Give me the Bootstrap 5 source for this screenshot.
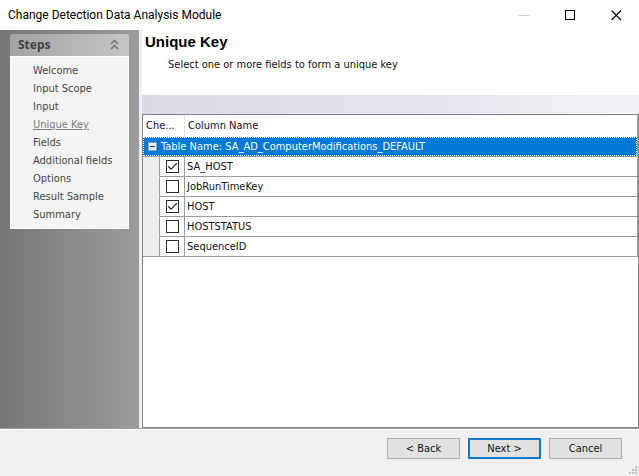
<!DOCTYPE html>
<html lang="en">
<head>
<meta charset="utf-8">
<meta name="viewport" content="width=device-width, initial-scale=1">
<title>Change Detection Data Analysis Module</title>
<link href="https://cdn.jsdelivr.net/npm/bootstrap@5.3.0/dist/css/bootstrap.min.css" rel="stylesheet">
<style>
body { font-family: "DejaVu Sans Condensed", "Noto Sans", sans-serif; font-size: 11px; line-height: 18px; color: #111; background: #fff; }
.titlebar { height: 30px; padding-left: 8px; font-family: Roboto, sans-serif; font-size: 12px; color: #000; }
.win-btn { width: 46px; height: 28px; border: 0; background: transparent; }
.sidebar { width: 139px; padding: 4px 10px; background: linear-gradient(90deg, #767676, #9c9c9c); }
.steps-head { height: 22px; padding: 0 8px; border: 0; border-radius: 2px 2px 0 0; background: linear-gradient(90deg, #a3a3a3, #c6c6c6); color: #404040; font-family: "Noto Sans", sans-serif; font-size: 12px; font-weight: 700; }
.steps-list { padding: 5px 0 4px 22px; background: #f4f4f4; border: 1px solid #fff; }
.steps-list a { color: #444; text-decoration: none; }
.steps-list a.current { color: #7d7d7d; text-decoration: underline; }
.work { border-left: 3px solid #f0f0f0; }
.page-head { height: 65px; padding: 3px 3px 0; }
.page-head h1 { font-family: "Liberation Sans", Arial, sans-serif; font-size: 15px; line-height: 18px; font-weight: 700; color: #000; }
.page-head p { padding: 5px 0 0 23px; }
.band { height: 19px; background: linear-gradient(90deg, #dadae6, #e4e4ee 55%, #f3f3f6); }
.grid-box { border: 1px solid #82868b; }
.fields { width: 100%; table-layout: fixed; border-collapse: separate; border-spacing: 0; border-right: 1px solid #a0a0a0; }
.fields td, .fields th { padding: 0 0 0 3px; font-weight: 400; white-space: nowrap; }
.fields th { height: 22px; border-right: 1px solid #e2e2e2; }
.fields th + th { border-right: 0; }
.fields td { height: 20px; padding-left: 2px; border-bottom: 1px solid #9b9b9f; border-right: 1px solid #9b9b9f; }
.fields td:last-child { border-right: 0; }
.fields td.gutter { background: #eee; border-bottom-color: #eee; }
.fields tr:last-child td.gutter { border-bottom-color: #9b9b9f; }
.fields td.tick { padding: 0 0 0 6px; }
.fields td.group-cell { padding: 0; }
.group-row { height: 19px; padding-left: 4px; gap: 4px; background: #0078d7; color: #fff; border: 1px dotted #fff; }
.fold { width: 9px; height: 9px; padding: 0; border: 0; background: transparent; }
.fold svg, .tick input { display: block; }
.tick input { appearance: none; width: 13px; height: 13px; margin: 0; border: 1px solid #2b2b2b; border-radius: 0; background: #fff; }
.tick input:checked { background: #fff url("data:image/svg+xml,%3Csvg xmlns='http://www.w3.org/2000/svg' viewBox='0 0 11 11'%3E%3Cpath d='M1.2 5.3L4 8.1L9.8 2.3' fill='none' stroke='%23333' stroke-width='1.3'/%3E%3C/svg%3E") center/11px 11px no-repeat; }
.foot { height: 48px; padding: 9px 17px 0 0; gap: 8px; border-top: 1px solid #a0a0a0; box-shadow: inset 0 1px #fff; background: #f0f0f0; }
.cmd { width: 73px; height: 21px; padding: 0; font-size: 11px; line-height: 17px; border: 1px solid #adadad; border-radius: 0; background: #e1e1e1; color: #111; }
.cmd.primary { border: 2px solid #0f78cc; }
.grip { right: 2px; bottom: 2px; }
</style>
<script src="https://cdn.jsdelivr.net/npm/bootstrap@5.3.0/dist/js/bootstrap.bundle.min.js"></script>
</head>
<body>
<div class="d-flex flex-column vh-100 overflow-hidden">
  <header class="titlebar d-flex align-items-center flex-shrink-0">
    <span class="me-auto">Change Detection Data Analysis Module</span>
    <button type="button" class="win-btn d-flex align-items-center justify-content-center" aria-label="Minimize" disabled><svg width="11" height="11"><path d="M0 5.500h10" stroke="#ccc"/></svg></button>
    <button type="button" class="win-btn d-flex align-items-center justify-content-center" aria-label="Maximize"><svg width="11" height="11"><path d="M.5.5h9v9h-9z" fill="none" stroke="#000" shape-rendering="crispEdges"/></svg></button>
    <button type="button" class="win-btn d-flex align-items-center justify-content-center" aria-label="Close"><svg width="11" height="11"><path d="M.5.5l9.500 9.500M10 .5L.5 10" stroke="#000" stroke-width="1.100"/></svg></button>
  </header>
  <div class="d-flex flex-grow-1">
    <nav class="sidebar flex-shrink-0" aria-label="Steps">
      <button type="button" class="steps-head d-flex w-100 align-items-center justify-content-between" data-bs-toggle="collapse" data-bs-target="#steps" aria-expanded="true" aria-controls="steps">Steps
        <svg width="13" height="12"><path d="M3 5l3.500-3.500L10 5M3 10l3.500-3.500L10 10" fill="none" stroke="#777" stroke-width="1.700"/></svg>
      </button>
      <ul id="steps" class="steps-list collapse show list-unstyled m-0">
        <li><a href="#">Welcome</a></li>
        <li><a href="#">Input Scope</a></li>
        <li><a href="#">Input</a></li>
        <li><a href="#" class="current" aria-current="step">Unique Key</a></li>
        <li><a href="#">Fields</a></li>
        <li><a href="#">Additional fields</a></li>
        <li><a href="#">Options</a></li>
        <li><a href="#">Result Sample</a></li>
        <li><a href="#">Summary</a></li>
      </ul>
    </nav>
    <main class="work d-flex flex-column flex-grow-1">
      <div class="page-head">
        <h1 class="m-0">Unique Key</h1>
        <p class="m-0">Select one or more fields to form a unique key</p>
      </div>
      <div class="band"></div>
      <div class="grid-box flex-grow-1">
        <table class="fields">
          <colgroup><col style="width:17px"><col style="width:25px"><col></colgroup>
          <thead><tr><th colspan="2" scope="col">Che...</th><th scope="col">Column Name</th></tr></thead>
          <tbody>
            <tr><td colspan="3" class="group-cell"><div class="group-row d-flex align-items-center"><button type="button" class="fold" aria-label="Collapse group"><svg width="9" height="9"><path d="M.5.5h8v8h-8z" fill="#e9edf2" stroke="#8fa3b8"/><path d="M2 4.500h5" stroke="#234"/></svg></button>Table Name: SA_AD_ComputerModifications_DEFAULT</div></td></tr>
            <tr><td class="gutter"></td><td class="tick"><input type="checkbox" id="f1" checked></td><td><label for="f1">SA_HOST</label></td></tr>
            <tr><td class="gutter"></td><td class="tick"><input type="checkbox" id="f2"></td><td><label for="f2">JobRunTimeKey</label></td></tr>
            <tr><td class="gutter"></td><td class="tick"><input type="checkbox" id="f3" checked></td><td><label for="f3">HOST</label></td></tr>
            <tr><td class="gutter"></td><td class="tick"><input type="checkbox" id="f4"></td><td><label for="f4">HOSTSTATUS</label></td></tr>
            <tr><td class="gutter"></td><td class="tick"><input type="checkbox" id="f5"></td><td><label for="f5">SequenceID</label></td></tr>
          </tbody>
        </table>
      </div>
    </main>
  </div>
  <footer class="foot d-flex justify-content-end align-items-start flex-shrink-0 position-relative">
    <button type="button" class="cmd">&lt; Back</button>
    <button type="button" class="cmd primary">Next &gt;</button>
    <button type="button" class="cmd">Cancel</button>
    <svg class="grip position-absolute" width="8" height="8" fill="#bfbfbf"><path d="M6 0h2v2h-2zM3 3h2v2h-2zM6 3h2v2h-2zM0 6h2v2h-2zM3 6h2v2h-2zM6 6h2v2h-2z"/></svg>
  </footer>
</div>
</body>
</html>
